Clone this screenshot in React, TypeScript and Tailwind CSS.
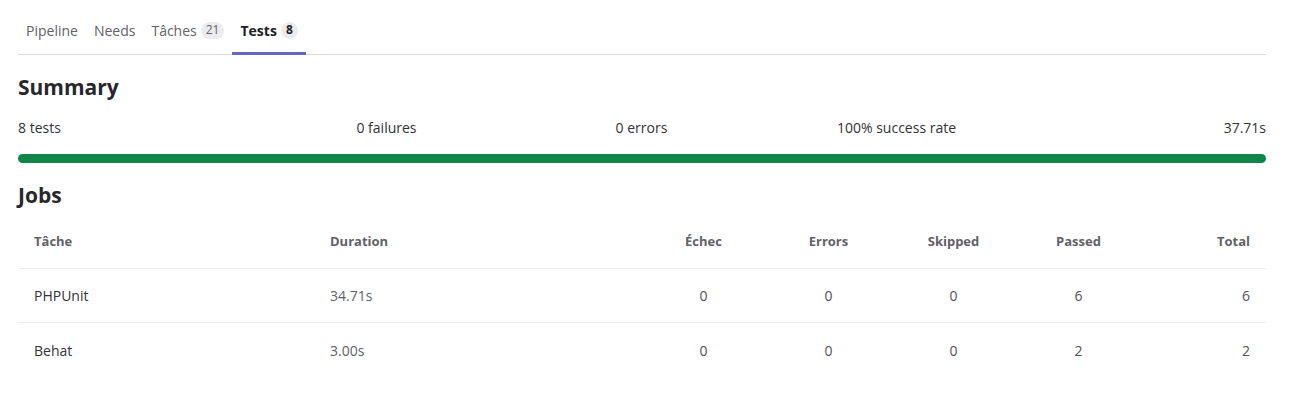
import React from 'react';

const tabs = [
  { label: 'Pipeline' },
  { label: 'Needs' },
  { label: 'Tâches', count: 21 },
  { label: 'Tests', count: 8, active: true },
];

const stats = ['8 tests', '0 failures', '0 errors', '100% success rate', '37.71s'];

const jobs = [
  { name: 'PHPUnit', duration: '34.71s', failed: 0, errors: 0, skipped: 0, passed: 6, total: 6 },
  { name: 'Behat', duration: '3.00s', failed: 0, errors: 0, skipped: 0, passed: 2, total: 2 },
];

const cols = 'grid grid-cols-[296px_327px_125px_125px_125px_125px_125px]';

export default function App() {
  return (
    <div
      className="min-h-[398px] bg-white pl-[18px] pr-[27px] pt-[8px] text-[#333238]"
      style={{ fontFamily: '"Open Sans", "Noto Sans", sans-serif' }}
    >
      {/* Tabs */}
      <div className="flex h-[47px] items-stretch border-b border-[#dcdcde]">
        {tabs.map((t) => (
          <div
            key={t.label}
            className={`-mb-px flex items-center gap-[4px] border-b-[3px] px-[8px] text-[14px] ${
              t.active ? 'border-[#6666c4] font-bold text-[#1f1e24]' : 'border-transparent text-[#626168]'
            }`}
          >
            <span>{t.label}</span>
            {t.count !== undefined && (
              <span
                className={`flex h-[17px] min-w-[17px] items-center justify-center rounded-full bg-[#ececef] px-[5px] text-[12px] ${
                  t.active ? 'font-bold text-[#1f1e24]' : 'font-normal text-[#626168]'
                }`}
              >
                {t.count}
              </span>
            )}
          </div>
        ))}
      </div>

      {/* Summary */}
      <h2 className="mt-[17px] text-[21px] font-bold leading-[30px] text-[#28272d]">Summary</h2>
      <div className="mt-[16px] grid grid-cols-[241px_255px_255px_255px_242px] text-[14px] leading-[20px]">
        {stats.map((s, i) => (
          <div
            key={s}
            className={i === 0 ? 'text-left' : i === stats.length - 1 ? 'text-right' : 'text-center'}
          >
            {s}
          </div>
        ))}
      </div>
      <div className="mt-[16px] h-[9px] w-full rounded-full bg-[#108548]" />

      {/* Jobs */}
      <h2 className="mt-[17px] text-[21px] font-bold leading-[30px] text-[#28272d]">Jobs</h2>
      <div className="mt-[5px] text-[14px]">
        <div className={`${cols} h-[54px] items-center border-b border-[#ececef] text-[13px] font-bold text-[#626168]`}>
          <div className="px-[16px]">Tâche</div>
          <div className="px-[16px]">Duration</div>
          <div className="px-[16px] text-center">Échec</div>
          <div className="px-[16px] text-center">Errors</div>
          <div className="px-[16px] text-center">Skipped</div>
          <div className="px-[16px] text-center">Passed</div>
          <div className="px-[16px] text-right">Total</div>
        </div>
        {jobs.map((j, i) => (
          <div
            key={j.name}
            className={`${cols} h-[54px] items-center ${i < jobs.length - 1 ? 'border-b border-[#ececef]' : ''}`}
          >
            <div className="px-[16px] text-[#333238]">{j.name}</div>
            <div className="px-[16px] text-[#626168]">{j.duration}</div>
            <div className="px-[16px] text-center text-[#535158]">{j.failed}</div>
            <div className="px-[16px] text-center text-[#535158]">{j.errors}</div>
            <div className="px-[16px] text-center text-[#535158]">{j.skipped}</div>
            <div className="px-[16px] text-center text-[#535158]">{j.passed}</div>
            <div className="px-[16px] text-right text-[#535158]">{j.total}</div>
          </div>
        ))}
      </div>
    </div>
  );
}
